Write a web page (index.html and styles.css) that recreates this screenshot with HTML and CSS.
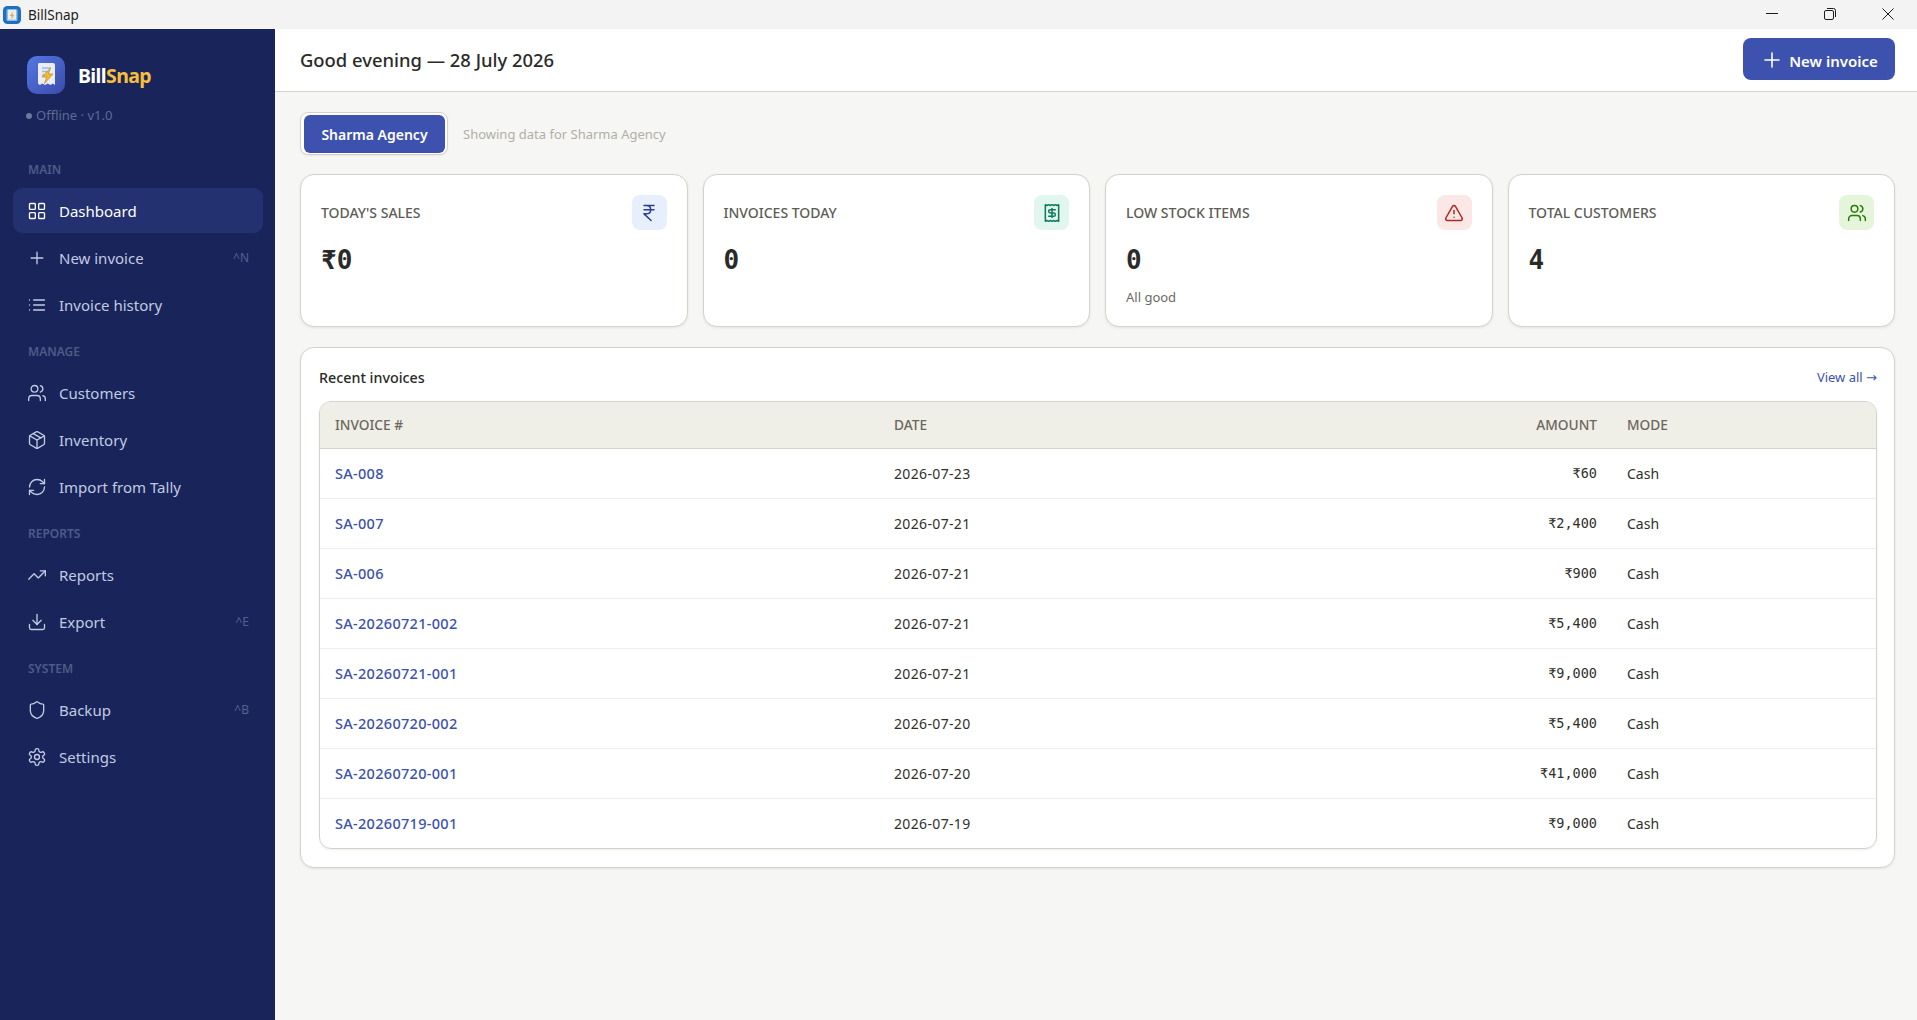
FILE: index.html
```html
<!DOCTYPE html>
<html lang="en">
<head>
    <meta charset="UTF-8">
    <title>BillSnap</title>
    <link rel="stylesheet" href="styles.css">
</head>
<body>
    <svg class="sprite" xmlns="http://www.w3.org/2000/svg">
        <symbol id="i-grid" viewBox="0 0 24 24"><rect x="3" y="3" width="7" height="7" rx="1"/><rect x="14" y="3" width="7" height="7" rx="1"/><rect x="14" y="14" width="7" height="7" rx="1"/><rect x="3" y="14" width="7" height="7" rx="1"/></symbol>
        <symbol id="i-plus" viewBox="0 0 24 24"><path d="M5 12h14M12 5v14"/></symbol>
        <symbol id="i-list" viewBox="0 0 24 24"><path d="M3 12h.01M3 18h.01M3 6h.01M8 12h13M8 18h13M8 6h13"/></symbol>
        <symbol id="i-users" viewBox="0 0 24 24"><path d="M16 21v-2a4 4 0 0 0-4-4H6a4 4 0 0 0-4 4v2"/><path d="M16 3.128a4 4 0 0 1 0 7.744"/><path d="M22 21v-2a4 4 0 0 0-3-3.87"/><circle cx="9" cy="7" r="4"/></symbol>
        <symbol id="i-box" viewBox="0 0 24 24"><path d="M11 21.73a2 2 0 0 0 2 0l7-4A2 2 0 0 0 21 16V8a2 2 0 0 0-1-1.73l-7-4a2 2 0 0 0-2 0l-7 4A2 2 0 0 0 3 8v8a2 2 0 0 0 1 1.73z"/><path d="M12 22V12"/><path d="M3.29 7 12 12l8.71-5"/><path d="m7.5 4.27 9 5.15"/></symbol>
        <symbol id="i-sync" viewBox="0 0 24 24"><path d="M3 12a9 9 0 0 1 9-9 9.75 9.75 0 0 1 6.74 2.74L21 8"/><path d="M21 3v5h-5"/><path d="M21 12a9 9 0 0 1-9 9 9.75 9.75 0 0 1-6.74-2.74L3 16"/><path d="M8 16H3v5"/></symbol>
        <symbol id="i-trend" viewBox="0 0 24 24"><path d="M16 7h6v6"/><path d="m22 7-8.5 8.5-5-5L2 17"/></symbol>
        <symbol id="i-download" viewBox="0 0 24 24"><path d="M12 15V3"/><path d="M21 15v4a2 2 0 0 1-2 2H5a2 2 0 0 1-2-2v-4"/><path d="m7 10 5 5 5-5"/></symbol>
        <symbol id="i-shield" viewBox="0 0 24 24"><path d="M20 13c0 5-3.5 7.5-7.66 8.95a1 1 0 0 1-.67-.01C7.5 20.5 4 18 4 13V6a1 1 0 0 1 1-1c2 0 4.5-1.2 6.24-2.72a1.17 1.17 0 0 1 1.52 0C14.51 3.81 17 5 19 5a1 1 0 0 1 1 1z"/></symbol>
        <symbol id="i-gear" viewBox="0 0 24 24"><path d="M12.22 2h-.44a2 2 0 0 0-2 2v.18a2 2 0 0 1-1 1.73l-.43.25a2 2 0 0 1-2 0l-.15-.08a2 2 0 0 0-2.73.73l-.22.38a2 2 0 0 0 .73 2.73l.15.1a2 2 0 0 1 1 1.72v.51a2 2 0 0 1-1 1.74l-.15.09a2 2 0 0 0-.73 2.73l.22.38a2 2 0 0 0 2.73.73l.15-.08a2 2 0 0 1 2 0l.43.25a2 2 0 0 1 1 1.73V20a2 2 0 0 0 2 2h.44a2 2 0 0 0 2-2v-.18a2 2 0 0 1 1-1.73l.43-.25a2 2 0 0 1 2 0l.15.08a2 2 0 0 0 2.73-.73l.22-.39a2 2 0 0 0-.73-2.73l-.15-.08a2 2 0 0 1-1-1.74v-.5a2 2 0 0 1 1-1.74l.15-.09a2 2 0 0 0 .73-2.73l-.22-.38a2 2 0 0 0-2.73-.73l-.15.08a2 2 0 0 1-2 0l-.43-.25a2 2 0 0 1-1-1.73V4a2 2 0 0 0-2-2z"/><circle cx="12" cy="12" r="3"/></symbol>
        <symbol id="i-rupee" viewBox="0 0 24 24"><path d="M6 3h12M6 8h12M6 13l8.5 8M6 13h3M9 13c6.667 0 6.667-10 0-10"/></symbol>
        <symbol id="i-receipt" viewBox="0 0 24 24"><path d="M4 2v20l2-1 2 1 2-1 2 1 2-1 2 1 2-1 2 1V2l-2 1-2-1-2 1-2-1-2 1-2-1-2 1Z"/><path d="M16 8h-6a2 2 0 1 0 0 4h4a2 2 0 1 1 0 4H8"/><path d="M12 17.5v-11"/></symbol>
        <symbol id="i-alert" viewBox="0 0 24 24"><path d="m21.73 18-8-14a2 2 0 0 0-3.48 0l-8 14A2 2 0 0 0 4 21h16a2 2 0 0 0 1.73-3"/><path d="M12 9v4"/><path d="M12 17h.01"/></symbol>
    </svg>

    <div class="titlebar">
        <div class="titlebar-name">
            <svg class="titlebar-logo" viewBox="0 0 18 18">
                <rect width="18" height="18" rx="4.500" fill="#1f6fc0"/>
                <rect x="3.500" y="3" width="11" height="12" rx="1.500" fill="#8fbce6"/>
                <path d="M5 4h8v10l-1.300-.8-1.400.8-1.300-.8-1.300.8-1.400-.8-1.300.8z" fill="#e6eef7"/>
                <path d="M10.200 5.500 6.800 10h2l-.8 3.500L11.400 9h-2z" fill="#eda52a"/>
            </svg>
            <span>BillSnap</span>
        </div>
        <div class="window-controls">
            <svg class="win-btn" viewBox="0 0 12 12"><path d="M0 5.500h12"/></svg>
            <svg class="win-btn" viewBox="0 0 12 12"><rect x="0.5" y="2.5" width="9" height="9" rx="1.5"/><path d="M3 0.5h6.5a2 2 0 0 1 2 2V9"/></svg>
            <svg class="win-btn" viewBox="0 0 12 12"><path d="M0.5 0.5l11 11M11.500 0.5l-11 11"/></svg>
        </div>
    </div>

    <div class="app">
        <aside class="sidebar">
            <div class="brand">
                <svg class="brand-logo" viewBox="0 0 38 38">
                    <defs>
                        <linearGradient id="logo-bg" x1="0" y1="0" x2="1" y2="1">
                            <stop offset="0" stop-color="#5577e4"/>
                            <stop offset="1" stop-color="#3a4caa"/>
                        </linearGradient>
                    </defs>
                    <rect width="38" height="38" rx="10" fill="url(#logo-bg)"/>
                    <path d="M12 7h14a2 2 0 0 1 2 2v20l-2-1.500-2.700 1.500-2.600-1.500-2.700 1.500-2.600-1.500-2.700 1.500-1.700-1.500V9a2 2 0 0 1 1-2z" fill="#e9edf8"/>
                    <path d="M15 12h9M15 15.500h7M15 19h4" stroke="#a9b6dc" stroke-width="1.400" fill="none"/>
                    <path d="M23.500 12 15 21h4.600L17.500 27.500 26 18h-4.600z" fill="#f3b832" stroke="#b5851d" stroke-width="0.600" stroke-linejoin="round"/>
                </svg>
                <div class="brand-name">Bill<span class="brand-accent">Snap</span></div>
            </div>
            <div class="brand-status"><span class="status-dot"></span>Offline · v1.0</div>

            <div class="nav-section">Main</div>
            <a class="nav-item active"><svg class="nav-icon"><use href="#i-grid"/></svg>Dashboard</a>
            <a class="nav-item"><svg class="nav-icon"><use href="#i-plus"/></svg>New invoice<span class="nav-key">^N</span></a>
            <a class="nav-item"><svg class="nav-icon"><use href="#i-list"/></svg>Invoice history</a>

            <div class="nav-section">Manage</div>
            <a class="nav-item"><svg class="nav-icon"><use href="#i-users"/></svg>Customers</a>
            <a class="nav-item"><svg class="nav-icon"><use href="#i-box"/></svg>Inventory</a>
            <a class="nav-item"><svg class="nav-icon"><use href="#i-sync"/></svg>Import from Tally</a>

            <div class="nav-section">Reports</div>
            <a class="nav-item"><svg class="nav-icon"><use href="#i-trend"/></svg>Reports</a>
            <a class="nav-item"><svg class="nav-icon"><use href="#i-download"/></svg>Export<span class="nav-key">^E</span></a>

            <div class="nav-section">System</div>
            <a class="nav-item"><svg class="nav-icon"><use href="#i-shield"/></svg>Backup<span class="nav-key">^B</span></a>
            <a class="nav-item"><svg class="nav-icon"><use href="#i-gear"/></svg>Settings</a>
        </aside>

        <div class="main">
            <header class="topbar">
                <h1 class="greeting">Good evening — 28 July 2026</h1>
                <button class="btn-primary"><svg class="btn-icon"><use href="#i-plus"/></svg>New invoice</button>
            </header>

            <div class="content">
                <div class="company-row">
                    <div class="company-tabs"><button class="company-tab">Sharma Agency</button></div>
                    <span class="company-hint">Showing data for Sharma Agency</span>
                </div>

                <div class="stats">
                    <div class="stat-card">
                        <div class="stat-top">
                            <span class="stat-label">Today's sales</span>
                            <span class="stat-icon blue"><svg><use href="#i-rupee"/></svg></span>
                        </div>
                        <div class="stat-value mono">₹0</div>
                    </div>
                    <div class="stat-card">
                        <div class="stat-top">
                            <span class="stat-label">Invoices today</span>
                            <span class="stat-icon teal"><svg><use href="#i-receipt"/></svg></span>
                        </div>
                        <div class="stat-value mono">0</div>
                    </div>
                    <div class="stat-card">
                        <div class="stat-top">
                            <span class="stat-label">Low stock items</span>
                            <span class="stat-icon red"><svg><use href="#i-alert"/></svg></span>
                        </div>
                        <div class="stat-value mono">0</div>
                        <div class="stat-note">All good</div>
                    </div>
                    <div class="stat-card">
                        <div class="stat-top">
                            <span class="stat-label">Total customers</span>
                            <span class="stat-icon green"><svg><use href="#i-users"/></svg></span>
                        </div>
                        <div class="stat-value mono">4</div>
                    </div>
                </div>

                <section class="panel">
                    <div class="panel-head">
                        <h2 class="panel-title">Recent invoices</h2>
                        <a class="panel-link">View all <span class="panel-arrow">→</span></a>
                    </div>
                    <div class="table-wrap">
                        <table class="invoices">
                            <colgroup>
                                <col class="col-no">
                                <col>
                                <col class="col-amount">
                                <col class="col-mode">
                            </colgroup>
                            <thead>
                                <tr><th>Invoice #</th><th>Date</th><th class="right">Amount</th><th>Mode</th></tr>
                            </thead>
                            <tbody>
                                <tr><td><a class="inv-link">SA-008</a></td><td class="date">2026-07-23</td><td class="right mono">₹60</td><td>Cash</td></tr>
                                <tr><td><a class="inv-link">SA-007</a></td><td class="date">2026-07-21</td><td class="right mono">₹2,400</td><td>Cash</td></tr>
                                <tr><td><a class="inv-link">SA-006</a></td><td class="date">2026-07-21</td><td class="right mono">₹900</td><td>Cash</td></tr>
                                <tr><td><a class="inv-link">SA-20260721-002</a></td><td class="date">2026-07-21</td><td class="right mono">₹5,400</td><td>Cash</td></tr>
                                <tr><td><a class="inv-link">SA-20260721-001</a></td><td class="date">2026-07-21</td><td class="right mono">₹9,000</td><td>Cash</td></tr>
                                <tr><td><a class="inv-link">SA-20260720-002</a></td><td class="date">2026-07-20</td><td class="right mono">₹5,400</td><td>Cash</td></tr>
                                <tr><td><a class="inv-link">SA-20260720-001</a></td><td class="date">2026-07-20</td><td class="right mono">₹41,000</td><td>Cash</td></tr>
                                <tr><td><a class="inv-link">SA-20260719-001</a></td><td class="date">2026-07-19</td><td class="right mono">₹9,000</td><td>Cash</td></tr>
                            </tbody>
                        </table>
                    </div>
                </section>
            </div>
        </div>
    </div>
</body>
</html>
```

FILE: styles.css
```css
* {
    margin: 0;
    padding: 0;
    box-sizing: border-box;
}

html, body {
    height: 100%;
    overflow: hidden;
}

body {
    font-family: "Noto Sans", "Open Sans", sans-serif;
    color: #2a2a28;
    background: #f6f6f4;
    display: flex;
    flex-direction: column;
}

.sprite {
    display: none;
}

.mono {
    font-family: "DejaVu Sans Mono", "Liberation Mono", monospace;
}

/* window title bar */
.titlebar {
    height: 29px;
    flex: none;
    background: #f3f3f3;
    display: flex;
    justify-content: space-between;
    align-items: center;
    padding: 0 23px 0 3px;
}

.titlebar-name {
    display: flex;
    align-items: center;
    gap: 7px;
    font-size: 13.5px;
    color: #1c1c1c;
}

.titlebar-logo {
    width: 18px;
    height: 18px;
}

.window-controls {
    display: flex;
    gap: 46px;
    margin-bottom: 2px;
}

.win-btn {
    width: 12px;
    height: 12px;
    fill: none;
    stroke: #1c1c1c;
    stroke-width: 1;
}

.app {
    flex: 1;
    display: flex;
    min-height: 0;
}

/* sidebar */
.sidebar {
    width: 275px;
    flex: none;
    background: #19255a;
    padding: 27px 12px 0 13px;
    display: flex;
    flex-direction: column;
}

.brand {
    display: flex;
    align-items: center;
    gap: 13px;
    padding-left: 14px;
}

.brand-logo {
    width: 38px;
    height: 38px;
}

.brand-name {
    font-size: 19.5px;
    font-weight: 700;
    color: #fff;
    letter-spacing: -0.6px;
}

.brand-accent {
    color: #f5bf3a;
}

.brand-status {
    display: flex;
    align-items: center;
    gap: 4px;
    font-size: 13px;
    color: #5f6a92;
    padding-left: 13px;
    margin-top: 12px;
    line-height: 18px;
    margin-bottom: 23px;
}

.status-dot {
    width: 6px;
    height: 6px;
    border-radius: 50%;
    background: #6f7897;
    margin-top: 1px;
}

.nav-section {
    font-size: 12px;
    font-weight: 600;
    text-transform: uppercase;
    color: #4e5b86;
    padding-left: 15px;
    height: 41px;
    line-height: 16px;
    padding-top: 15px;
}

.nav-item {
    height: 45px;
    flex: none;
    margin-bottom: 2px;
    border-radius: 9px;
    padding: 0 14px;
    display: flex;
    align-items: center;
    gap: 12px;
    font-size: 15px;
    color: #c2cae2;
}

.nav-item.active {
    background: #233170;
    color: #fff;
}

.nav-icon {
    width: 20px;
    height: 20px;
    fill: none;
    stroke: currentColor;
    stroke-width: 1.6;
    stroke-linecap: round;
    stroke-linejoin: round;
}

.nav-key {
    margin-left: auto;
    font-size: 12px;
    color: #55618b;
}

/* main area */
.main {
    flex: 1;
    min-width: 0;
    display: flex;
    flex-direction: column;
}

.topbar {
    height: 63px;
    flex: none;
    background: #fff;
    border-bottom: 1px solid #d5d3c7;
    display: flex;
    justify-content: space-between;
    align-items: center;
    padding: 0 22px 2px 25px;
}

.greeting {
    font-size: 18.4px;
    font-weight: 500;
    color: #2a2a28;
}

.btn-primary {
    height: 42px;
    width: 152px;
    border: 0;
    border-radius: 8px;
    background: #3d51ae;
    color: #fff;
    font-family: inherit;
    font-size: 15px;
    font-weight: 600;
    display: flex;
    align-items: center;
    justify-content: center;
    gap: 5px;
    padding-top: 4px;
}

.btn-icon {
    width: 24px;
    height: 24px;
    margin-top: -3px;
    fill: none;
    stroke: currentColor;
    stroke-width: 1.6;
    stroke-linecap: round;
}

.content {
    flex: 1;
    padding: 20px 22px 0 25px;
    display: flex;
    flex-direction: column;
}

.company-row {
    display: flex;
    align-items: center;
    gap: 15px;
    margin-bottom: 19px;
}

.company-tabs {
    background: #fff;
    border: 1px solid #d5d3c7;
    border-radius: 8px;
    padding: 2px 2px 1px 3px;
    box-shadow: 0 1px 2px rgba(0,0,0,0.06);
}

.company-tab {
    display: block;
    height: 38px;
    width: 141px;
    border: 0;
    border-radius: 6px;
    background: #3d51ae;
    color: #fff;
    font-family: inherit;
    font-size: 14px;
    font-weight: 600;
}

.company-hint {
    font-size: 13px;
    color: #b1afa6;
}

/* stat cards */
.stats {
    display: grid;
    grid-template-columns: repeat(4, 1fr);
    gap: 15px;
    margin-bottom: 20px;
}

.stat-card {
    height: 153px;
    background: #fff;
    border: 1px solid #d5d3c7;
    border-radius: 14px;
    padding: 20px;
    box-shadow: 0 1px 3px rgba(0,0,0,0.08);
}

.stat-top {
    display: flex;
    justify-content: space-between;
    align-items: center;
    margin-bottom: 15px;
}

.stat-label {
    font-size: 14px;
    font-weight: 500;
    text-transform: uppercase;
    color: #5e5c56;
}

.stat-icon {
    width: 35px;
    height: 35px;
    border-radius: 8px;
    display: flex;
    align-items: center;
    justify-content: center;
}

.stat-icon svg {
    width: 20px;
    height: 20px;
    fill: none;
    stroke: currentColor;
    stroke-width: 1.8;
    stroke-linecap: round;
    stroke-linejoin: round;
}

.stat-icon.blue { background: #e7effd; color: #2b3c94; }
.stat-icon.teal { background: #e0f6ee; color: #0f7a5a; }
.stat-icon.red { background: #fbe8e6; color: #b3261e; }
.stat-icon.green { background: #e5f5da; color: #2c7a0c; }

.stat-value {
    font-size: 26px;
    font-weight: 700;
    line-height: 30px;
    color: #2a2a28;
}

.stat-note {
    font-size: 13px;
    color: #6b6a64;
    margin-top: 13px;
}

/* recent invoices */
.panel {
    background: #fff;
    border: 1px solid #d5d3c7;
    border-radius: 14px;
    padding: 0 17px 18px 18px;
    box-shadow: 0 1px 3px rgba(0,0,0,0.08);
}

.panel-head {
    height: 53px;
    display: flex;
    justify-content: space-between;
    align-items: center;
    padding-top: 5px;
}

.panel-title {
    font-size: 14.3px;
    font-weight: 500;
    color: #2a2a28;
}

.panel-link {
    font-size: 13px;
    color: #3d51ae;
}

.panel-arrow {
    font-family: "DejaVu Sans", sans-serif;
}

.table-wrap {
    border: 1px solid #d5d3c7;
    border-radius: 12px;
    overflow: hidden;
    box-shadow: 0 1px 2px rgba(0,0,0,0.08);
}

.invoices {
    width: 100%;
    border-collapse: collapse;
    table-layout: fixed;
}

.col-no { width: 559px; }
.col-amount { width: 120px; }
.col-mode { width: 264px; }

.invoices th {
    height: 46px;
    background: #efeee7;
    border-bottom: 1px solid #d5d3c7;
    padding: 0 15px;
    text-align: left;
    font-size: 13.7px;
    font-weight: 500;
    text-transform: uppercase;
    color: #6b675d;
}

.invoices td {
    height: 50px;
    padding: 0 15px;
    border-bottom: 1px solid #efeee8;
    font-size: 14px;
    color: #2f2f2c;
}

.invoices tbody tr:last-child td {
    border-bottom: 0;
}

.invoices .right {
    text-align: right;
}

.invoices td.mono {
    font-size: 13.5px;
}

.invoices td.date {
    letter-spacing: 0.35px;
}

.inv-link {
    color: #3d51ae;
    font-size: 14.5px;
    font-weight: 500;
    letter-spacing: 0.3px;
}
```
